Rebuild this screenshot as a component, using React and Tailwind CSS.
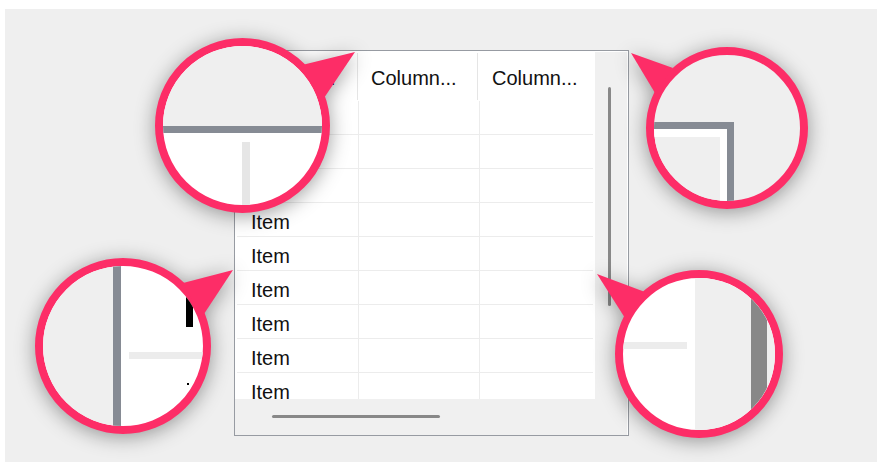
import React from "react";

const FONT = { fontFamily: '"Liberation Sans", Arial, sans-serif' };
const PINK = "#fd2d67";
const ROWS = Array.from({ length: 9 });

function HeaderCell({ className, children }) {
  return (
    <div className={`h-full pt-[16px] leading-[23px] text-[20px] text-[#111] whitespace-nowrap ${className}`}>
      {children}
    </div>
  );
}

function HeaderSep() {
  return <div className="w-px mt-[2px] h-[47px] bg-[#e5e5e5] shrink-0" />;
}

function ListView() {
  return (
    <div className="w-[395px] h-[386px] border border-[#979ba2] bg-[#f0f0f0] grid grid-cols-[360px_33px] grid-rows-[348px_36px]">
      {/* items area */}
      <div className="bg-white overflow-hidden flex flex-col">
        <div className="flex h-[50px] shrink-0">
          <HeaderCell className="w-[122px] pl-[15px]">Column...</HeaderCell>
          <HeaderSep />
          <HeaderCell className="w-[119px] pl-[13px]">Column...</HeaderCell>
          <HeaderSep />
          <HeaderCell className="flex-1 pl-[14px]">Column...</HeaderCell>
        </div>
        <div className="px-[2px]">
          {ROWS.map((_, i) => (
            <div
              key={i}
              className="grid grid-cols-[122px_121px_113px] h-[34px] border-b border-[#ececec] text-[20px] leading-[23px] text-[#111]"
            >
              <div className="border-r border-[#ececec] pl-[14px] pt-[8px]">Item</div>
              <div className="border-r border-[#ececec]" />
              <div />
            </div>
          ))}
        </div>
      </div>
      {/* vertical scrollbar */}
      <div className="row-span-2 pl-[13px] pt-[36px] shadow-[inset_-1px_1px_0_#ffffff]">
        <div className="w-[3px] h-[219px] rounded-full bg-[#888888]" />
      </div>
      {/* horizontal scrollbar */}
      <div className="pl-[37px] pt-[16px]">
        <div className="w-[168px] h-[3px] rounded-full bg-[#888888]" />
      </div>
    </div>
  );
}

// Magnifier bubble with a pointer; the bubble's contents are laid out in flow.
function Callout({ left, top, size, points, className, children }) {
  return (
    <div className="absolute inset-0 pointer-events-none [filter:drop-shadow(0_3px_10px_rgba(0,0,0,0.38))]">
      <div
        className={`absolute rounded-full border-[8px] overflow-hidden ${className}`}
        style={{ left, top, width: size, height: size, borderColor: PINK }}
      >
        {children}
      </div>
      <svg className="absolute inset-0" width="877" height="462" viewBox="0 0 877 462">
        <polygon points={points} fill={PINK} />
      </svg>
    </div>
  );
}

export default function App() {
  return (
    <div className="relative w-[877px] h-[462px] overflow-hidden bg-white pl-[5px] pt-[9px]" style={FONT}>
      <div className="h-full bg-[#efefef] pl-[229px] pt-[41px]">
        <ListView />
      </div>

      {/* header edge close-up */}
      <Callout left={155} top={38} size={175} points="355,52 298,66 324,98" className="bg-white flex flex-col">
        <div className="h-[80px] shrink-0 bg-[#efefef]" />
        <div className="h-[7px] shrink-0 bg-[#868b94]" />
        <div className="flex-1 pl-[79px] pt-[9px]">
          <div className="w-[8px] h-full bg-[#e6e6e6]" />
        </div>
      </Callout>

      {/* top-right corner close-up */}
      <Callout left={646} top={47} size={162} points="631,53 673,68 655,93" className="bg-[#efefef]">
        <div className="mt-[67px] w-[80px] h-full border-t-[7px] border-r-[7px] border-[#868b94]">
          <div className="h-full border-t-[8px] border-r-[7px] border-white bg-[#efefef]" />
        </div>
      </Callout>

      {/* left border close-up */}
      <Callout left={35} top={258} size={176} points="233,270 183,283 202,317" className="bg-white flex">
        <div className="w-[70px] shrink-0 bg-[#efefef]" />
        <div className="w-[8px] shrink-0 bg-[#868b94]" />
        <div className="flex-1 pt-[29px]">
          <div className="ml-[65px] w-[7px] h-[32px] bg-black" />
          <div className="ml-[8px] mt-[25px] h-[7px] bg-[#ececec]" />
          <div className="ml-[66px] mt-[24px] w-[2px] h-[2px] bg-black" />
        </div>
      </Callout>

      {/* scrollbar edge close-up */}
      <Callout left={615} top={270} size={168} points="597,274 645,292 625,318" className="bg-white flex">
        <div className="w-[72px] shrink-0 pt-[64px]">
          <div className="w-[64px] h-[7px] bg-[#ececec]" />
        </div>
        <div className="flex-1 bg-[#efefef] pl-[56px]">
          <div className="w-[16px] h-full bg-[#888888]" />
        </div>
      </Callout>
    </div>
  );
}
